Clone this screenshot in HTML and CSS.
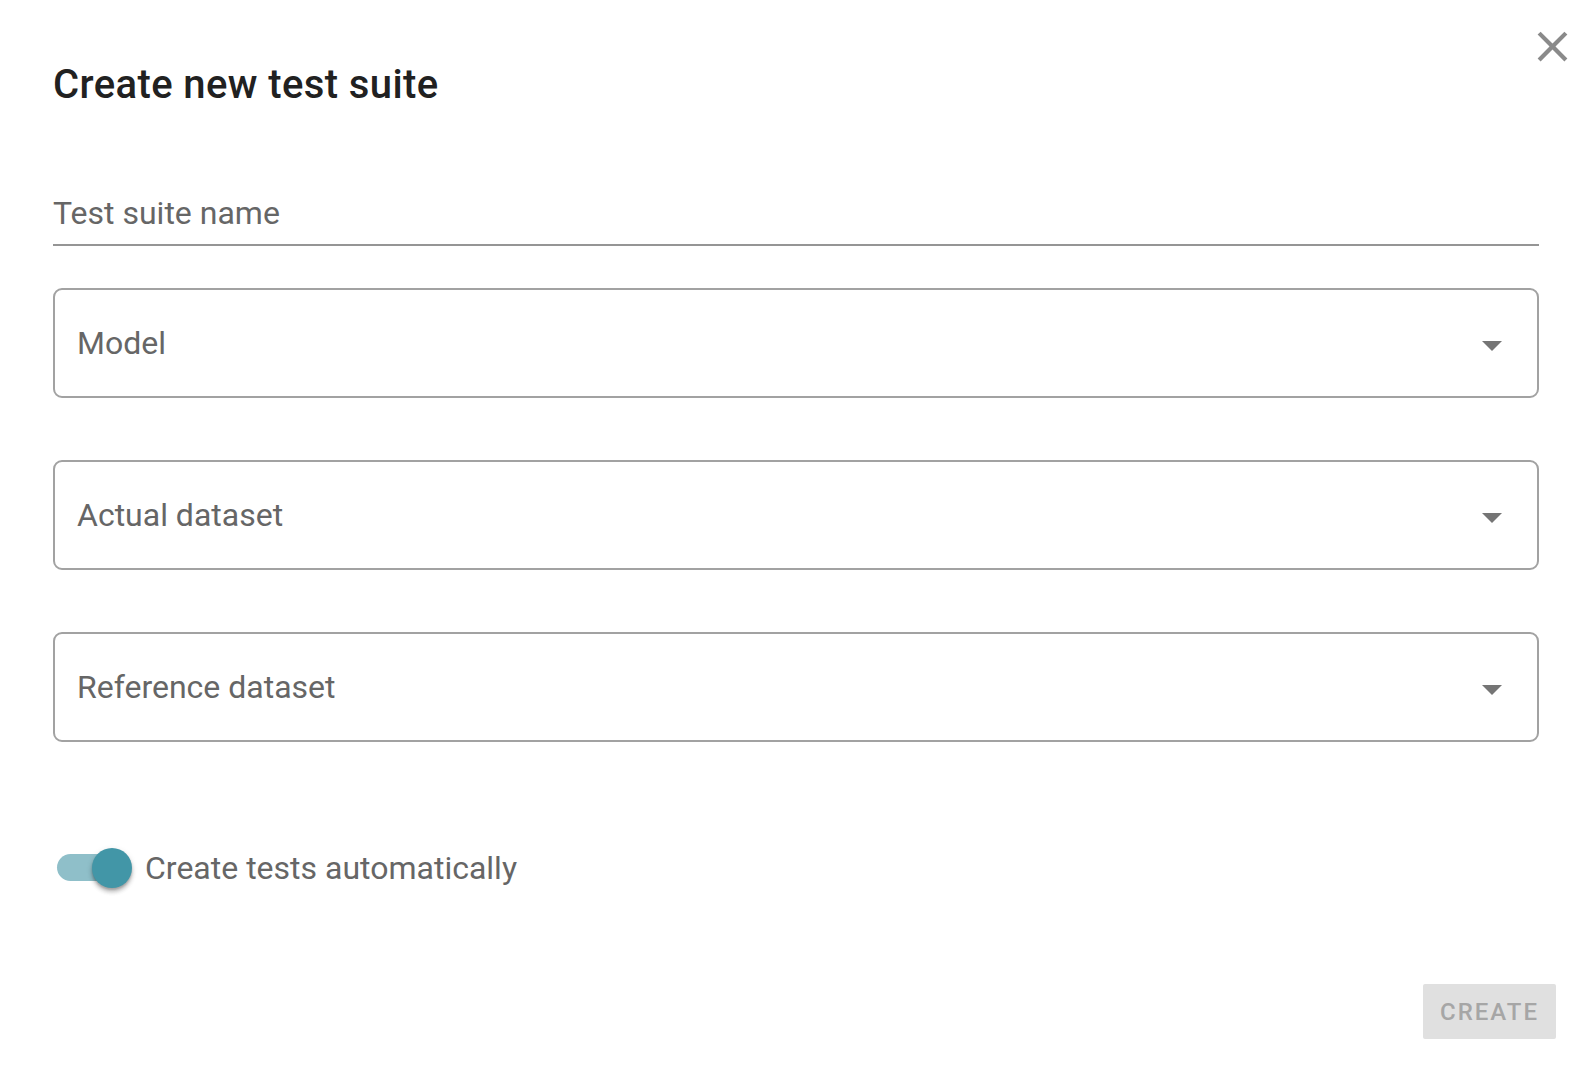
FILE: index.html
```html
<!DOCTYPE html>
<html lang="en">
<head>
<meta charset="utf-8">
<title>Create new test suite</title>
<link rel="stylesheet" href="styles.css">
</head>
<body>
<div class="dialog">
  <button class="close" aria-label="Close">
    <svg viewBox="0 0 24 24" width="51" height="51"><path d="M19 6.41L17.59 5 12 10.59 6.41 5 5 6.41 10.59 12 5 17.59 6.41 19 12 13.41 17.59 19 19 17.59 13.41 12z" fill="#8a8a8a"/></svg>
  </button>
  <h2 class="title">Create new test suite</h2>
  <div class="content">
    <div class="text-field"><span class="field-label">Test suite name</span></div>
    <div class="select"><span class="select-label">Model</span><svg class="arrow" viewBox="0 0 20 10" width="20" height="10"><path d="M0 0L10 10L20 0z" fill="#757575"/></svg></div>
    <div class="select"><span class="select-label">Actual dataset</span><svg class="arrow" viewBox="0 0 20 10" width="20" height="10"><path d="M0 0L10 10L20 0z" fill="#757575"/></svg></div>
    <div class="select"><span class="select-label">Reference dataset</span><svg class="arrow" viewBox="0 0 20 10" width="20" height="10"><path d="M0 0L10 10L20 0z" fill="#757575"/></svg></div>
    <label class="switch-row">
      <span class="switch"><span class="track"></span><span class="thumb"></span></span>
      <span class="switch-label">Create tests automatically</span>
    </label>
  </div>
  <div class="actions">
    <button class="create" disabled>CREATE</button>
  </div>
</div>
</body>
</html>
```
FILE: styles.css
```css
html, body {
  margin: 0;
  padding: 0;
  background: #ffffff;
}
body {
  font-family: Roboto, "Noto Sans", "Liberation Sans", sans-serif;
  color: #666666;
}
.dialog {
  position: relative;
  width: 1596px;
  height: 1074px;
  box-sizing: border-box;
  padding: 61px 41px 0 53px;
}
.close {
  position: absolute;
  top: 21px;
  left: 1527px;
  width: 51px;
  height: 51px;
  padding: 0;
  border: 0;
  background: transparent;
  display: block;
}
.close svg { display: block; }
.title {
  margin: 0;
  font-size: 40px;
  line-height: 48px;
  font-weight: 500;
  color: #212121;
  letter-spacing: 0.4px;
}
.content {
  width: 1486px;
  display: flex;
  flex-direction: column;
}
.text-field {
  margin-top: 84px;
  padding-bottom: 11px;
  border-bottom: 2px solid #959595;
}
.field-label {
  display: block;
  font-size: 32px;
  line-height: 40px;
}
.select {
  margin-top: 42px;
  height: 110px;
  box-sizing: border-box;
  border: 2px solid #a2a2a2;
  border-radius: 9px;
  display: flex;
  align-items: center;
  justify-content: space-between;
  padding: 0 35px 0 22px;
}
.select + .select { margin-top: 62px; }
.select-label {
  font-size: 32px;
  line-height: 40px;
}
.arrow {
  display: block;
  margin-top: 6px;
}
.switch-row {
  margin-top: 106px;
  display: flex;
  align-items: center;
  gap: 13px;
}
.switch {
  position: relative;
  width: 79px;
  height: 40px;
  flex: none;
}
.track {
  position: absolute;
  left: 4px;
  top: 6px;
  width: 68px;
  height: 27px;
  border-radius: 14px;
  background: #8fbfc9;
}
.thumb {
  position: absolute;
  left: 39px;
  top: 0;
  width: 40px;
  height: 40px;
  border-radius: 50%;
  background: #4296a7;
  box-shadow: 0 4px 4px rgba(0,0,0,0.2), 0 2px 2px rgba(0,0,0,0.14), 0 2px 6px rgba(0,0,0,0.12);
}
.switch-label {
  font-size: 32px;
  line-height: 40px;
}
.actions {
  position: absolute;
  right: 40px;
  bottom: 35px;
}
.create {
  width: 133px;
  height: 55px;
  border: 0;
  border-radius: 2px;
  background: #e0e0e0;
  color: #a6a6a6;
  font-family: Roboto, "Noto Sans", sans-serif;
  font-weight: 500;
  font-size: 24px;
  letter-spacing: 2px;
  padding: 0;
}
```
